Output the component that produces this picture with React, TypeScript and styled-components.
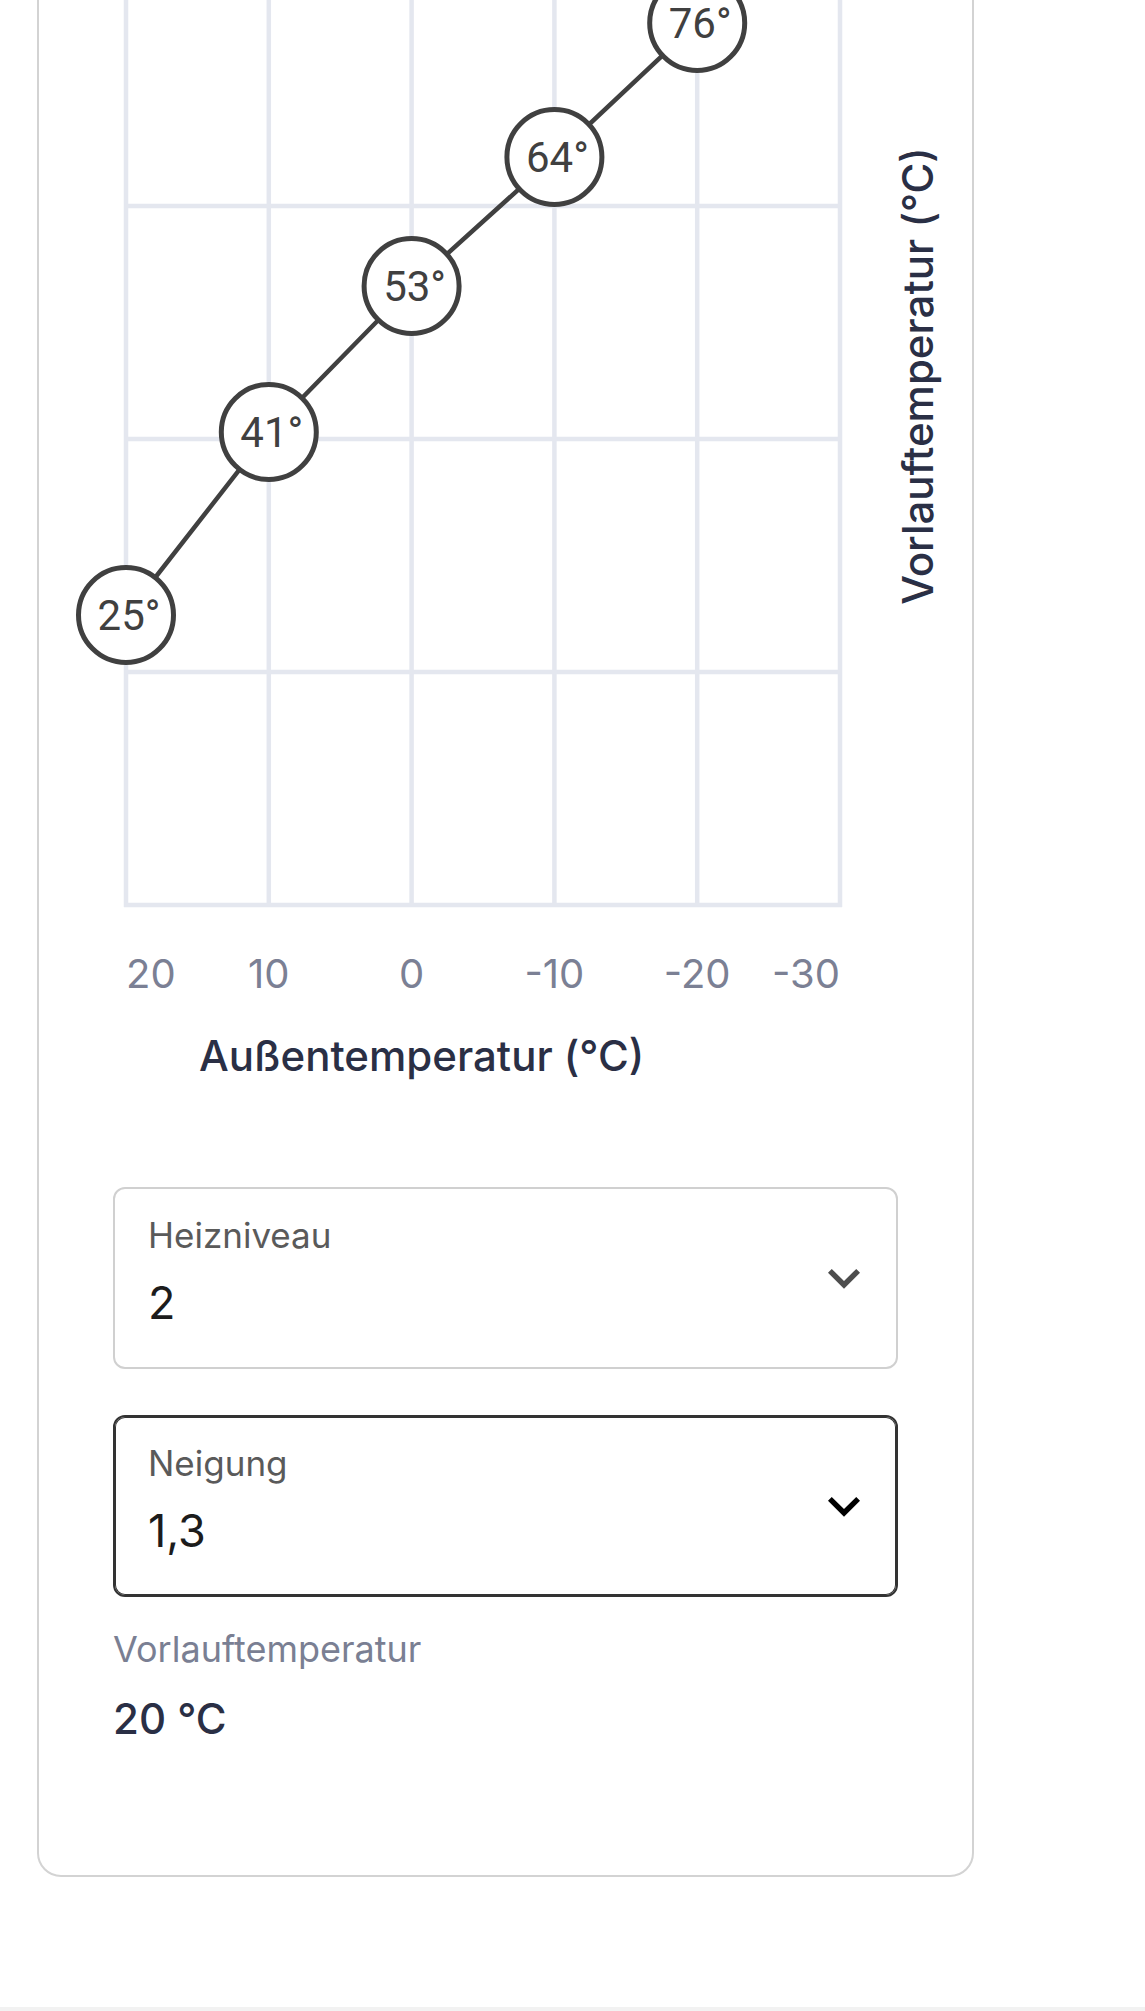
import { FC } from 'react'
import styled, { createGlobalStyle } from 'styled-components';

const GlobalStyle = createGlobalStyle`
  body {
    margin: 0;
    background: #ffffff;
    font-family: Inter, "Noto Sans", "Liberation Sans", sans-serif;
  }
`;

// the card is scrolled: its top lies above the window
const Card = styled.div`
  box-sizing: border-box;
  width: 937px;
  margin: -300px 0 0 37px;
  border: solid 2px #d3d3d3;
  border-radius: 24px;
  padding-bottom: 130px;
  background: #fff;
`;

const ChartSvg = styled.svg`
  display: block;
  width: 933px;
  height: 1388px;
`;

const Fields = styled.div`
  display: flex;
  flex-direction: column;
  gap: 46px;
  margin-top: 97px;
  padding: 0 74px;
`;

const SelectBox = styled.div<{ $active?: boolean }>`
  box-sizing: border-box;
  height: 182px;
  display: flex;
  align-items: center;
  justify-content: space-between;
  padding: 0 20px 0 33px;
  border: solid 2px ${(p) => (p.$active ? '#333333' : '#d0d0d0')};
  box-shadow: ${(p) => (p.$active ? 'inset 0 0 0 1px #333333' : 'none')};
  border-radius: 12px;
  background: #fff;
`;

const SelectText = styled.div`
  align-self: flex-start;
  display: flex;
  flex-direction: column;
  gap: 20px;
  padding-top: 25px;
`;

const SelectLabel = styled.div`
  font-size: 35px;
  line-height: 42px;
  color: #5a5a5a;
`;

const SelectValue = styled.div`
  font-size: 45px;
  line-height: 54px;
  color: #1c1c1c;
`;

const Chevron = styled.svg<{ $active?: boolean }>`
  width: 64px;
  height: 64px;
  flex: none;
  fill: ${(p) => (p.$active ? '#000000' : '#4d4d4d')};
`;

const Caption = styled.div`
  margin: 31px 74px 0;
  font-size: 36px;
  line-height: 43px;
  color: #7a7f93;
`;

const Reading = styled.div`
  margin: 22px 74px 0;
  font-size: 42px;
  line-height: 52px;
  font-weight: 500;
  color: #2a2f45;
`;

const BottomStrip = styled.div`
  margin-top: 130px;
  height: 12px;
  background: #f2f2f2;
`;

interface CurvePoint {
  outside: number,
  flow: number,
  y: number,
}

const plotLeft = 87;
const plotRight = 801;
const plotBottom = 1203;
const rowHeight = 233;
const colWidth = (plotRight - plotLeft) / 5;

const points: CurvePoint[] = [
  { outside: 20, flow: 25, y: 913 },
  { outside: 10, flow: 41, y: 730 },
  { outside: 0, flow: 53, y: 584 },
  { outside: -10, flow: 64, y: 455 },
  { outside: -20, flow: 76, y: 321 },
  { outside: -30, flow: 88, y: 178 },
];

const HeatingCurve: FC = () => {
  const xs = points.map((_, i) => plotLeft + i * colWidth);
  const rows = [0, 1, 2, 3, 4, 5].map((i) => plotBottom - i * rowHeight);

  return (
    <ChartSvg viewBox='0 0 933 1388'>
      <g stroke='#e4e7ef' strokeWidth={4.5}>
        {xs.map((x, i) => <line key={'v' + i} x1={x} x2={x} y1={rows[5]} y2={plotBottom + 2} />)}
        {rows.map((y, i) => <line key={'h' + i} x1={plotLeft - 2} x2={plotRight + 2} y1={y} y2={y} />)}
      </g>
      <polyline
        points={points.map((p, i) => `${xs[i]},${p.y}`).join(' ')}
        fill='none'
        stroke='#404040'
        strokeWidth={4.5}
      />
      {points.map((p, i) => (
        <g key={p.outside}>
          <circle cx={xs[i]} cy={p.y} r={47.5} fill='#fff' stroke='#404040' strokeWidth={5} />
          <text
            x={xs[i] + 3}
            y={p.y + 15}
            textAnchor='middle'
            fontFamily='Roboto, "Liberation Sans", sans-serif'
            fontSize={42}
            fill='#404040'
          >
            {p.flow}°
          </text>
        </g>
      ))}
      {points.map((p, i) => (
        <text
          key={'t' + p.outside}
          x={xs[i]}
          y={1286}
          textAnchor={i === 0 ? 'start' : i === points.length - 1 ? 'end' : 'middle'}
          fontFamily='Inter, sans-serif'
          fontSize={40}
          fill='#7b8094'
        >
          {p.outside}
        </text>
      ))}
      <text
        x={894}
        y={674}
        transform='rotate(-90 894 674)'
        textAnchor='middle'
        fontFamily='Inter, sans-serif'
        fontSize={42}
        fontWeight={500}
        fill='#2a2f45'
      >
        Vorlauftemperatur (°C)
      </text>
      <text x={160} y={1369} fontFamily='Inter, sans-serif' fontSize={42} fontWeight={500} fill='#2a2f45'>
        Außentemperatur (°C)
      </text>
    </ChartSvg>
  );
}

interface SelectFieldProps {
  label: string,
  value: string,
  active?: boolean,
}

const SelectField: FC<SelectFieldProps> = ({ label, value, active }) => (
  <SelectBox $active={active}>
    <SelectText>
      <SelectLabel>{label}</SelectLabel>
      <SelectValue>{value}</SelectValue>
    </SelectText>
    <Chevron $active={active} viewBox='0 0 24 24'>
      <path d='M16.59 8.59 12 13.17 7.41 8.59 6 10l6 6 6-6z' />
    </Chevron>
  </SelectBox>
);

const App = () => {
  return (
    <>
      <GlobalStyle />
      <Card>
        <HeatingCurve />
        <Fields>
          <SelectField label='Heizniveau' value='2' />
          <SelectField label='Neigung' value='1,3' active />
        </Fields>
        <Caption>Vorlauftemperatur</Caption>
        <Reading>20 °C</Reading>
      </Card>
      <BottomStrip />
    </>
  )
};

export default App;
